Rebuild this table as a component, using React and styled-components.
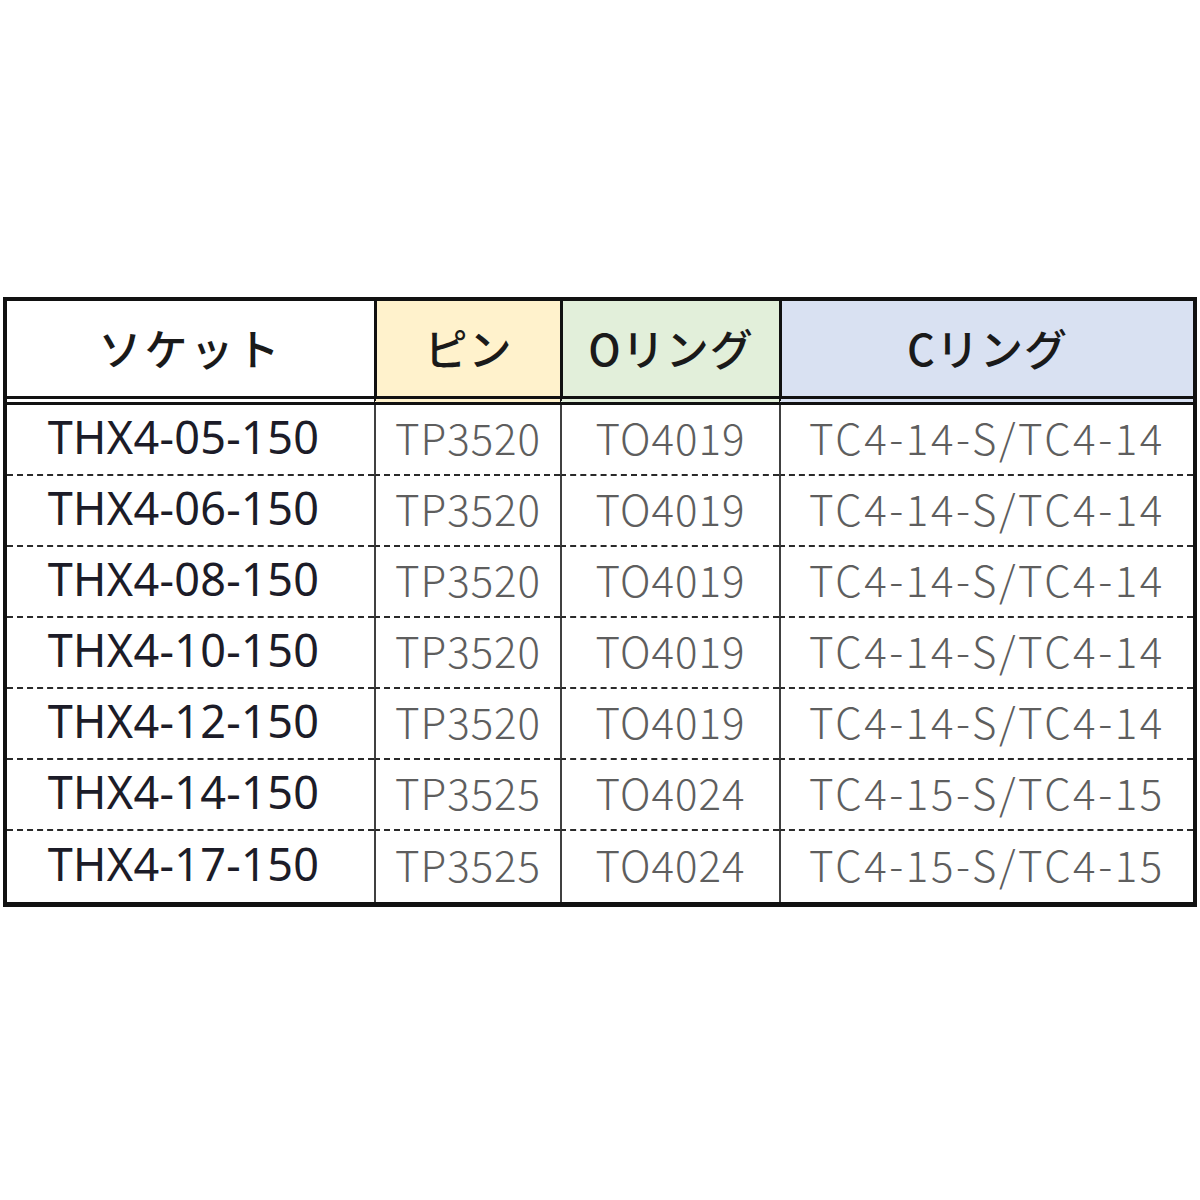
import React from 'react'
import styled, { createGlobalStyle } from 'styled-components'

const rows = [
  ['THX4-05-150', 'TP3520', 'TO4019', 'TC4-14-S/TC4-14'],
  ['THX4-06-150', 'TP3520', 'TO4019', 'TC4-14-S/TC4-14'],
  ['THX4-08-150', 'TP3520', 'TO4019', 'TC4-14-S/TC4-14'],
  ['THX4-10-150', 'TP3520', 'TO4019', 'TC4-14-S/TC4-14'],
  ['THX4-12-150', 'TP3520', 'TO4019', 'TC4-14-S/TC4-14'],
  ['THX4-14-150', 'TP3525', 'TO4024', 'TC4-15-S/TC4-15'],
  ['THX4-17-150', 'TP3525', 'TO4024', 'TC4-15-S/TC4-15'],
]

const headers = [
  { label: 'ソケット', bg: '#ffffff' },
  { label: 'ピン', bg: '#fff2cc' },
  { label: 'Oリング', bg: '#e2efda' },
  { label: 'Cリング', bg: '#d9e1f2' },
]

export default function App() {
  return (
    <>
      <GlobalStyle />
      <Page>
        <Table>
          {headers.map((h, i) => (
            <HeadCell key={h.label} bg={h.bg} first={i === 0}>
              {h.label}
            </HeadCell>
          ))}
          {rows.map((row, r) =>
            row.map((text, c) => (
              <Cell
                key={`${r}-${c}`}
                first={c === 0}
                spacing={c === 3 ? 2.6 : c === 0 ? 0.3 : 1}
                last={r === rows.length - 1}
              >
                {text}
              </Cell>
            )),
          )}
        </Table>
      </Page>
    </>
  )
}

// #region styles
const GlobalStyle = createGlobalStyle`
  html, body {
    margin: 0;
    padding: 0;
    background: #ffffff;
  }
`

const Page = styled.div`
  width: 1200px;
  height: 1200px;
  padding: 297px 0 0 3px;
  box-sizing: border-box;
`

const Table = styled.div`
  display: grid;
  grid-template-columns: 367px 186px 219px 414px;
  width: 1194px;
  box-sizing: border-box;
  border: 4px solid #111;
  border-bottom-width: 5px;
`

const HeadCell = styled.div`
  display: flex;
  align-items: center;
  justify-content: center;
  box-sizing: border-box;
  height: 104px;
  background: ${({ bg }) => bg};
  border-left: ${({ first }) => (first ? 'none' : '3px solid #111')};
  border-bottom: 9px double #111;
  font-family: 'Noto Sans CJK JP', 'Noto Sans', sans-serif;
  font-weight: 500;
  font-size: 43px;
  letter-spacing: ${({ first }) => (first ? '3px' : '1px')};
  color: #1a1a1a;
  padding-bottom: 3px;
`

const Cell = styled.div`
  display: flex;
  align-items: center;
  justify-content: center;
  box-sizing: border-box;
  height: 71px;
  border-left: ${({ first }) => (first ? 'none' : '2px solid #404040')};
  border-bottom: ${({ last }) => (last ? 'none' : '2px dashed #2a2a2a')};
  font-family: ${({ first }) =>
    first
      ? "'Noto Sans', sans-serif"
      : "'Noto Sans CJK JP', 'Noto Sans', sans-serif"};
  font-size: ${({ first }) => (first ? '45px' : '42px')};
  font-weight: ${({ first }) => (first ? 400 : 300)};
  letter-spacing: ${({ spacing }) => spacing}px;
  color: ${({ first }) => (first ? '#1c1c28' : '#5e5e5e')};
  padding-bottom: 6px;
  padding-right: ${({ first }) => (first ? '14px' : '0')};
`
// #endregion
